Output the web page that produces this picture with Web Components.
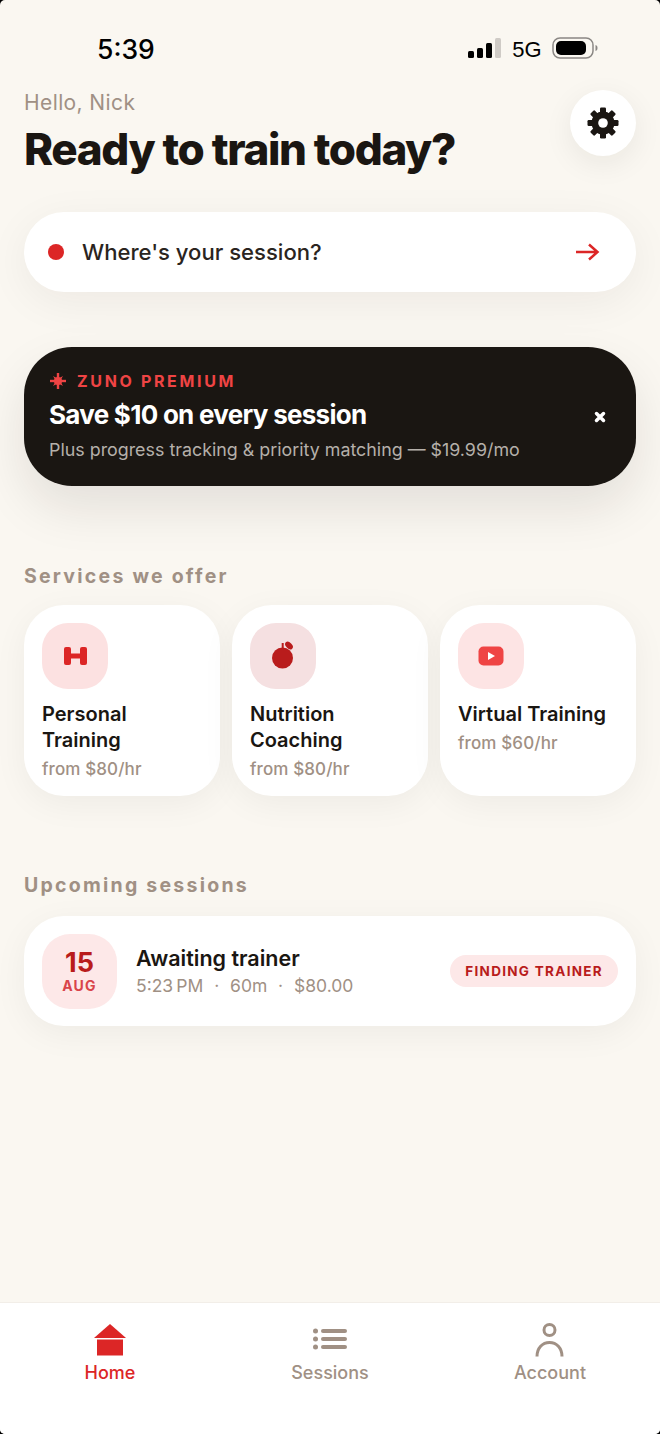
<!DOCTYPE html>
<html lang="en">
<head>
<meta charset="utf-8">
<title>Zuno</title>
<style>
html { background: #000; }
body { margin: 0; height: 1434px; display: flex; flex-direction: column; background: #faf7f1; font-family: Inter, "Noto Sans", sans-serif; color: #1a1612; border-radius: 5px; overflow: hidden; }
main { flex: 1; display: flex; flex-direction: column; padding: 0 24px; }
</style>
</head>
<body>
<status-bar></status-bar>
<main>
  <home-header name="Nick">Ready to train today?</home-header>
  <search-pill>Where's your session?</search-pill>
  <premium-banner label="ZUNO PREMIUM" title="Save $10 on every session">Plus progress tracking &amp; priority matching — $19.99/mo</premium-banner>
  <section-title style="margin-top:78px">Services we offer</section-title>
  <service-row>
    <service-card price="from $80/hr" tone="#fce1e1">
      <svg slot="icon" width="26" height="22" viewBox="0 0 26 22"><g fill="#dc2626"><rect x="2" y="2" width="7" height="18" rx="2"/><rect x="18" y="2" width="7" height="18" rx="2"/><rect x="8" y="8.500" width="11" height="5"/></g></svg>
      Personal<br>Training
    </service-card>
    <service-card price="from $80/hr" tone="#f5e0e1">
      <svg slot="icon" width="26" height="30" viewBox="0 0 26 30"><circle cx="12.500" cy="17" r="10.500" fill="#b91c1c"/><rect x="11.700" y="2" width="2" height="6" fill="#b91c1c"/><ellipse cx="19" cy="4.500" rx="3" ry="4.500" transform="rotate(-45 19 4.500)" fill="#b91c1c"/></svg>
      Nutrition<br>Coaching
    </service-card>
    <service-card price="from $60/hr" tone="#fde4e4">
      <svg slot="icon" width="26" height="20" viewBox="0 0 26 20"><rect x="0.500" y="0.500" width="25" height="19" rx="5" fill="#ef4444"/><path d="M10 6l7 4-7 4z" fill="#fff"/></svg>
      Virtual Training
    </service-card>
  </service-row>
  <section-title style="margin-top:77px;margin-bottom:19px">Upcoming sessions</section-title>
  <session-card day="15" month="AUG" status="FINDING TRAINER" title="Awaiting trainer">5:23&#8239;PM &nbsp;·&nbsp; 60m &nbsp;·&nbsp; $80.00</session-card>
</main>
<tab-bar>
  <tab-item active label="Home">
    <svg width="34" height="34" viewBox="0 0 34 34"><path d="M17 1L33 15H1z" fill="#dc2626"/><rect x="4" y="16.500" width="26" height="16" fill="#dc2626"/></svg>
  </tab-item>
  <tab-item label="Sessions">
    <svg width="34" height="34" viewBox="0 0 34 34" fill="#a09084"><circle cx="2.500" cy="8" r="2.500"/><circle cx="2.500" cy="16" r="2.500"/><circle cx="2.500" cy="24" r="2.500"/><rect x="8" y="6" width="26" height="4" rx="2"/><rect x="8" y="14" width="26" height="4" rx="2"/><rect x="8" y="22" width="26" height="4" rx="2"/></svg>
  </tab-item>
  <tab-item label="Account">
    <svg width="34" height="34" viewBox="0 0 34 34" fill="none" stroke="#a09084" stroke-width="3"><circle cx="16.500" cy="7" r="5.500"/><path d="M4 33.500C4 25 9.500 19.500 16.500 19.500S29 25 29 33.500"/></svg>
  </tab-item>
</tab-bar>

<script>
// small helper, every element just gets its html in an open shadow root
function shadow(el, html) {
  el.attachShadow({ mode: "open" }).innerHTML = html;
}

class StatusBar extends HTMLElement {
  connectedCallback() {
    shadow(this, `<style>
      :host { display: flex; align-items: center; height: 90px; padding: 5px 62px 0 97px; box-sizing: border-box; font-family: Inter, sans-serif; color: #000; }
      .time { font-size: 26.500px; font-weight: 500; flex: 1; margin-top: 2px; }
      .net { font-family: "Liberation Sans", sans-serif; font-size: 22px; margin: 4px 10.500px 0 10px; }
      svg { display: block; }
    </style>
    <span class="time">5:39</span>
    <svg width="34" height="22" viewBox="0 0 34 22"><rect x="0" y="14" width="6" height="7" rx="1.500"/><rect x="9" y="11" width="6" height="10" rx="1.500"/><rect x="18" y="6" width="6" height="15" rx="1.500"/><rect x="27" y="1" width="6" height="20" rx="1.500" fill="#cfcbc6"/></svg>
    <span class="net">5G</span>
    <svg width="46" height="22" viewBox="0 0 46 22"><rect x="1" y="1" width="40" height="20" rx="7" fill="none" stroke="#8a8784" stroke-width="1.500"/><rect x="4" y="4" width="30" height="14" rx="5"/><path d="M43.500 8c1.500.4 2 1.500 2 3s-.5 2.600-2 3z" fill="#8a8784"/></svg>`);
  }
}

class HomeHeader extends HTMLElement {
  connectedCallback() {
    shadow(this, `<style>
      :host { display: flex; justify-content: space-between; height: 122px; }
      .hello { font-size: 21px; line-height: 26px; letter-spacing: .4px; color: #a09084; margin-bottom: 6px; }
      h1 { margin: 0; font-size: 44px; line-height: 54px; font-weight: 800; letter-spacing: -1.370px; }
      button { width: 66px; height: 66px; border: 0; border-radius: 50%; background: #fff; padding: 0; display: grid; place-items: center; box-shadow: 0 8px 30px rgba(26,22,18,.07); }
    </style>
    <div><div class="hello">Hello, ${this.getAttribute("name")}</div><h1><slot></slot></h1></div>
    <button><svg width="34" height="34" viewBox="0 0 34 34"><g fill="#1a1612" id="t">
      ${[0, 45, 90, 135, 180, 225, 270, 315].map(a => `<rect x="14" y="1.500" width="6" height="8" rx="1.200" transform="rotate(${a} 17 17)"/>`).join("")}
      <circle cx="17" cy="17" r="11.500"/></g><circle cx="17" cy="17" r="4.800" fill="#fff"/></svg></button>`);
  }
}

class SearchPill extends HTMLElement {
  connectedCallback() {
    shadow(this, `<style>
      :host { display: flex; align-items: center; height: 80px; border-radius: 40px; background: #fff; padding: 0 36px 0 24px; box-shadow: 0 10px 44px rgba(26,22,18,.06); font-size: 22.100px; font-weight: 500; color: #2a2420; }
      i { width: 16px; height: 16px; border-radius: 50%; background: #dc2626; margin-right: 18px; }
      span { flex: 1; }
    </style>
    <i></i><span><slot></slot></span>
    <svg width="25" height="20" viewBox="0 0 25 20" fill="none" stroke="#dc2626" stroke-width="2.500"><path d="M1 10h21M14 2.500l8.500 7.500-8.500 7.500"/></svg>`);
  }
}

class PremiumBanner extends HTMLElement {
  connectedCallback() {
    shadow(this, `<style>
      :host { display: flex; align-items: center; margin-top: 55px; height: 139px; box-sizing: border-box; border-radius: 48px; background: #1a1612; padding: 0 30px 0 25px; color: #fff; box-shadow: 0 22px 50px rgba(26,22,18,.1); }
      .txt { flex: 1; margin-top: 2px; }
      .label { display: flex; align-items: center; gap: 11px; color: #ef4444; font-size: 16px; line-height: 20px; font-weight: 700; letter-spacing: 2.650px; margin: -2px 0 0 1px; }
      .title { font-size: 26px; line-height: 34px; font-weight: 700; letter-spacing: -.72px; margin: 7px 0 5px; }
      .sub { font-size: 17.850px; line-height: 26px; color: #b5b0aa; }
      .star { flex: none; }
    </style>
    <div class="txt">
      <div class="label"><svg class="star" width="16" height="16" viewBox="0 0 16 16" fill="#ef4444"><rect x="6.800" y="0" width="2.400" height="16"/><rect x="0" y="6.800" width="16" height="2.400"/><circle cx="8" cy="8" r="4"/><path d="M3 3l3.500 2-1.500 1.500zM13 3l-2 3.500-1.500-1.500zM3 13l2-3.500 1.500 1.500zM13 13l-3.500-2 1.500-1.500z"/></svg>${this.getAttribute("label")}</div>
      <div class="title">${this.getAttribute("title")}</div>
      <div class="sub"><slot></slot></div>
    </div>
    <svg width="12" height="12" viewBox="0 0 12 12" stroke="#fff" stroke-width="3.500" stroke-linecap="round"><path d="M2.500 2.500l7 7M9.500 2.500l-7 7"/></svg>`);
  }
}

class SectionTitle extends HTMLElement {
  connectedCallback() {
    shadow(this, `<style>
      :host { display: block; font-size: 19.500px; line-height: 24px; font-weight: 700; letter-spacing: 2.240px; color: #a09084; margin-bottom: 17px; }
    </style><slot></slot>`);
  }
}

class ServiceRow extends HTMLElement {
  connectedCallback() {
    shadow(this, `<style>:host { display: grid; grid-template-columns: repeat(3, 1fr); gap: 12px; }</style><slot></slot>`);
  }
}

class ServiceCard extends HTMLElement {
  connectedCallback() {
    shadow(this, `<style>
      :host { display: block; height: 191px; box-sizing: border-box; padding: 18px; border-radius: 40px; background: #fff; box-shadow: 0 8px 34px rgba(26,22,18,.05); }
      .ico { width: 66px; height: 66px; border-radius: 26px; background: ${this.getAttribute("tone")}; display: grid; place-items: center; margin-bottom: 12px; }
      .name { font-size: 20px; line-height: 26px; font-weight: 600; }
      .price { font-size: 17px; line-height: 20px; letter-spacing: .12px; font-weight: 500; color: #a09084; margin-top: 6px; }
    </style>
    <div class="ico"><slot name="icon"></slot></div>
    <div class="name"><slot></slot></div>
    <div class="price">${this.getAttribute("price")}</div>`);
  }
}

class SessionCard extends HTMLElement {
  connectedCallback() {
    shadow(this, `<style>
      :host { display: flex; align-items: center; height: 110px; box-sizing: border-box; padding: 0 18px; border-radius: 40px; background: #fff; box-shadow: 0 8px 34px rgba(26,22,18,.05); }
      .date { width: 75px; height: 75px; border-radius: 28px; background: #fde8e8; display: flex; flex-direction: column; align-items: center; justify-content: center; margin-right: 19px; }
      .day { font-size: 27px; line-height: 30px; font-weight: 700; color: #b91c1c; }
      .mon { font-size: 14px; line-height: 16px; font-weight: 700; letter-spacing: 1.200px; color: #d9444a; }
      .info { flex: 1; margin-top: 1px; }
      .title { font-size: 21.500px; line-height: 27px; font-weight: 600; margin-bottom: 2px; }
      .meta { font-size: 17.500px; line-height: 24px; word-spacing: .5px; color: #a09084; }
      .badge { height: 32px; border-radius: 16px; padding: 0 15px; background: #fde8e8; color: #b91c1c; font-size: 13.500px; line-height: 32px; font-weight: 700; letter-spacing: 1.300px; }
    </style>
    <div class="date"><span class="day">${this.getAttribute("day")}</span><span class="mon">${this.getAttribute("month")}</span></div>
    <div class="info"><div class="title">${this.getAttribute("title")}</div><div class="meta"><slot></slot></div></div>
    <div class="badge">${this.getAttribute("status")}</div>`);
  }
}

class TabBar extends HTMLElement {
  connectedCallback() {
    shadow(this, `<style>
      :host { display: grid; grid-template-columns: repeat(3, 1fr); height: 132px; box-sizing: border-box; padding-top: 20px; background: #fff; border-top: 1px solid #f2eee8; }
    </style><slot></slot>`);
  }
}

class TabItem extends HTMLElement {
  connectedCallback() {
    const on = this.hasAttribute("active");
    shadow(this, `<style>
      :host { display: flex; flex-direction: column; align-items: center; font-size: 18px; line-height: 24px; font-weight: 500; color: ${on ? "#dc2626" : "#a09084"}; }
      ::slotted(svg) { display: block; margin-bottom: 4px; }
    </style><slot></slot>${this.getAttribute("label")}`);
  }
}

customElements.define("status-bar", StatusBar);
customElements.define("home-header", HomeHeader);
customElements.define("search-pill", SearchPill);
customElements.define("premium-banner", PremiumBanner);
customElements.define("section-title", SectionTitle);
customElements.define("service-row", ServiceRow);
customElements.define("service-card", ServiceCard);
customElements.define("session-card", SessionCard);
customElements.define("tab-bar", TabBar);
customElements.define("tab-item", TabItem);
</script>
</body>
</html>
